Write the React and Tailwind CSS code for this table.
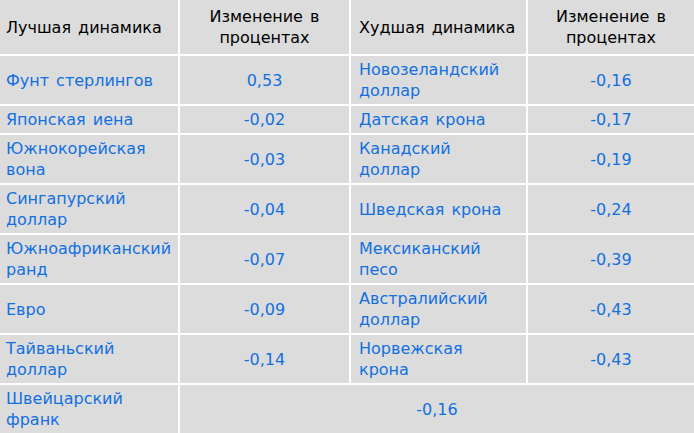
import React from "react";

const rows = [
  ["Фунт стерлингов", "0,53", ["Новозеландский", "доллар"], "-0,16"],
  ["Японская иена", "-0,02", "Датская крона", "-0,17"],
  [["Южнокорейская", "вона"], "-0,03", ["Канадский", "доллар"], "-0,19"],
  [["Сингапурский", "доллар"], "-0,04", "Шведская крона", "-0,24"],
  [["Южноафриканский", "ранд"], "-0,07", ["Мексиканский", "песо"], "-0,39"],
  ["Евро", "-0,09", ["Австралийский", "доллар"], "-0,43"],
  [["Тайваньский", "доллар"], "-0,14", ["Норвежская", "крона"], "-0,43"],
];

function Name({ v }) {
  if (Array.isArray(v)) {
    return (
      <>
        {v[0]}
        <br />
        {v[1]}
      </>
    );
  }
  return v;
}

export default function App() {
  return (
    <div className="w-[694px] h-[433px] overflow-hidden bg-white font-['DejaVu_Sans',sans-serif] text-[16px] leading-[21px] [word-spacing:2px]">
      <div className="grid grid-cols-[178px_169px_175px_166px] gap-[2px]">
        <div className="bg-[#dcdcdc] h-[54px] flex items-center pl-[6px] text-black">Лучшая динамика</div>
        <div className="bg-[#dcdcdc] h-[54px] flex items-center justify-center text-center text-black">
          Изменение в<br />процентах
        </div>
        <div className="bg-[#dcdcdc] h-[54px] flex items-center pl-[8px] text-black">Худшая динамика</div>
        <div className="bg-[#dcdcdc] h-[54px] flex items-center justify-center text-center text-black">
          Изменение в<br />процентах
        </div>

        {rows.map((r, i) => (
          <React.Fragment key={i}>
            <div className="bg-[#dcdcdc] min-h-[27px] py-[3px] pl-[6px] flex items-center text-[#1270e2]">
              <div><Name v={r[0]} /></div>
            </div>
            <div className="bg-[#dcdcdc] py-[3px] flex items-center justify-center text-[#1270e2]">{r[1]}</div>
            <div className="bg-[#dcdcdc] py-[3px] pl-[8px] flex items-center text-[#1270e2]">
              <div><Name v={r[2]} /></div>
            </div>
            <div className="bg-[#dcdcdc] py-[3px] flex items-center justify-center text-[#1270e2]">{r[3]}</div>
          </React.Fragment>
        ))}

        <div className="bg-[#dcdcdc] h-[48px] py-[3px] pl-[6px] flex items-center text-[#1270e2]">
          <div>Швейцарский<br />франк</div>
        </div>
        <div className="col-span-3 bg-[#dcdcdc] h-[48px] flex items-center justify-center text-[#1270e2]">-0,16</div>
      </div>
    </div>
  );
}
